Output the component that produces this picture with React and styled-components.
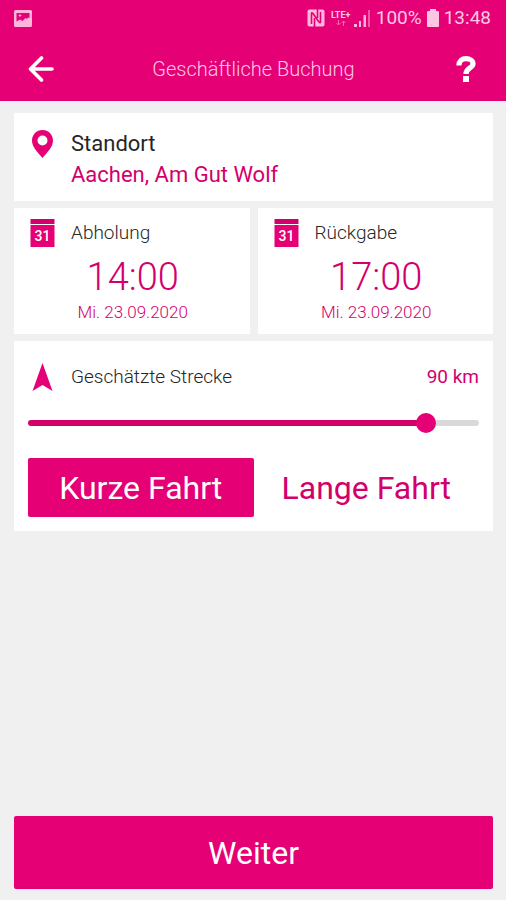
import React, { useState } from "react";
import styled, { createGlobalStyle } from "styled-components";

const magenta = "#e50075";
const ink = "#d3006c";

const GlobalStyle = createGlobalStyle`
  *, *::before, *::after { box-sizing: border-box; }
  body {
    margin: 0;
    background: #f0f0f0;
    font-family: Roboto, "Liberation Sans", sans-serif;
    color: #262626;
  }
  button, input { font: inherit; margin: 0; }
  h1, h2, p { margin: 0; font-weight: inherit; }
`;

const Screen = styled.div`
  min-height: 100vh;
  display: flex;
  flex-direction: column;
`;

const Header = styled.header`
  background: ${magenta};
  color: #ffc6e4;
`;

const StatusBar = styled.div`
  display: flex;
  align-items: center;
  justify-content: space-between;
  height: 36px;
  padding: 0 15px 0 14px;
  font-size: 19px;
  line-height: 24px;
`;

const StatusGroup = styled.div`
  display: flex;
  align-items: center;
  gap: 5px;
`;

const NetworkGroup = styled.div`
  display: flex;
  align-items: center;
  gap: 2px;
`;

const TitleBar = styled.div`
  display: grid;
  grid-template-columns: 48px 1fr 48px;
  align-items: center;
  height: 65px;
  padding: 0 16px 0 17px;
`;

const Title = styled.h1`
  font-size: 20px;
  line-height: 28px;
  font-weight: 300;
  text-align: center;
`;

const IconButton = styled.button`
  display: grid;
  place-items: center;
  height: 48px;
  padding: 0;
  border: 0;
  background: none;
  color: #fff;
`;

const Main = styled.main`
  flex: 1;
  display: flex;
  flex-direction: column;
  gap: 7px;
  padding: 12px 13px 11px 14px;
`;

const Card = styled.section`
  background: #fff;
  padding: ${(p) => p.$pad};
`;

const CardHead = styled.div`
  display: grid;
  grid-template-columns: 29px 1fr auto;
  column-gap: 14px;
  align-items: center;
`;

const PlaceLabel = styled.h2`
  font-size: 22px;
  line-height: 30px;
  font-weight: 400;
`;

const Place = styled.p`
  grid-column: 2;
  color: ${ink};
  font-size: 22px;
  line-height: 32px;
`;

const Label = styled.label`
  font-size: 19px;
  line-height: 30px;
  font-weight: 300;
`;

const Distance = styled.output`
  font-size: 19px;
  line-height: 30px;
  color: ${ink};
`;

const TimeRow = styled.div`
  display: grid;
  grid-template-columns: 1fr 1fr;
  gap: 8px;
`;

const TimeBlock = styled.div`
  display: flex;
  flex-direction: column;
  align-items: center;
  padding-left: 2px;
  color: ${ink};
  font-weight: 300;
`;

const Time = styled.time`
  font-size: 38px;
  line-height: 58px;
`;

const DateText = styled.p`
  font-size: 17px;
  line-height: 12px;
`;

const Slider = styled.input`
  appearance: none;
  display: block;
  width: 100%;
  height: 20px;
  margin: 21px 0 25px;
  background: none;
  &::-webkit-slider-runnable-track {
    height: 6px;
    border-radius: 3px;
    background: linear-gradient(to right, ${ink} var(--fill), #d9d9d9 var(--fill));
  }
  &::-webkit-slider-thumb {
    appearance: none;
    width: 20px;
    height: 20px;
    margin-top: -7px;
    border-radius: 50%;
    background: ${magenta};
  }
`;

const TripOptions = styled.div`
  display: grid;
  grid-template-columns: 1fr 1fr;
`;

const Button = styled.button`
  height: ${(p) => (p.$tall ? "73px" : "59px")};
  padding: 0;
  border: 0;
  border-radius: 2px;
  font-size: 32px;
  line-height: 40px;
  color: ${(p) => (p.$filled ? "#fff" : ink)};
  background: ${(p) => (p.$filled ? magenta : "transparent")};
`;

const Footer = styled.div`
  display: grid;
  margin-top: auto;
`;

const PictureIcon = () => (
  <svg width="18" height="17" viewBox="0 0 18 17" aria-hidden="true">
    <path fill="#ffb5dc" fillRule="evenodd" d="M1.500 0h15Q18 0 18 1.500v14q0 1.500-1.500 1.500h-15Q0 17 0 15.500v-14Q0 0 1.500 0ZM2.500 3v8.500L6 9.500l2.500 1.500 3-3 1.500 1 1-1.500 1.500.5V3Z" />
    <path fill="#ffb5dc" d="M6 3.500l.6 1.400 1.400.6-1.400.6L6 7.500l-.6-1.400L4 5.500l1.400-.6Z" />
  </svg>
);

const NfcIcon = () => (
  <svg width="18" height="18" viewBox="0 0 18 18" aria-hidden="true">
    <rect x=".5" y=".5" width="17" height="17" rx="2" fill="#ffb9de" />
    <path fill="none" stroke={magenta} strokeWidth="1.600" d="M4.500 15V4.500Q4.500 3 6 4.500l6 8.500q1.500 1.500 1.500 0V3M7.500 9v9M10.500 9V0" />
  </svg>
);

const LteBox = styled.span`
  display: flex;
  flex-direction: column;
  align-items: center;
  width: 22px;
  font-size: 9px;
  line-height: 9px;
  font-weight: 700;
`;

const LteArrows = () => (
  <svg width="10" height="6" viewBox="0 0 10 6" aria-hidden="true">
    <path fill="none" stroke="#f76db2" d="M2.500 0v4M.5 3l2 2 2-2M7.500 6V1M5.500 3l2-2 2 2" />
  </svg>
);

const SignalIcon = () => (
  <svg width="17" height="18" viewBox="0 0 17 18" aria-hidden="true">
    <g fill="#ffb0da">
      <path d="M0 15h3v3H0zM5 12h2v6H5zM9.500 6h2.500v12H9.500z" />
      <path opacity=".5" d="M14 1h2v17h-2z" />
    </g>
  </svg>
);

const BatteryIcon = () => (
  <svg width="12" height="18" viewBox="0 0 12 18" aria-hidden="true">
    <path fill="#ffc6e4" d="M3 0h6v2h2q1 0 1 1v14q0 1-1 1H1q-1 0-1-1V3q0-1 1-1h2Z" />
  </svg>
);

const BackIcon = () => (
  <svg width="26" height="26" viewBox="0 0 26 26" aria-hidden="true">
    <path fill="none" stroke="#fff" strokeWidth="3.600" strokeLinecap="round" strokeLinejoin="round" d="M13.500 2 2.500 13l11 11M2.500 13H24" />
  </svg>
);

const HelpIcon = () => (
  <svg width="20" height="26" viewBox="0 0 20 26" aria-hidden="true">
    <path fill="none" stroke="#fff" strokeWidth="5.200" d="M2.900 9.500C3 5 6 2.700 10 2.700s7 2 7 5c0 4.400-7 4.300-7 10.300" />
    <rect x="7" y="20" width="6" height="6" fill="#fff" />
  </svg>
);

const PinIcon = () => (
  <svg width="29" height="28" viewBox="0 0 28 28" aria-hidden="true">
    <path fill={magenta} fillRule="evenodd" d="M14 0C7.900 0 3.500 4.700 3.500 10.500 3.500 17 9 22 14 28c5-6 10.500-11 10.500-17.500C24.500 4.700 20.100 0 14 0Zm0 5.500a5 5 0 1 1 0 10 5 5 0 0 1 0-10Z" />
  </svg>
);

const CalendarGlyph = styled.svg`
  font: 500 14px Roboto, sans-serif;
`;

const CalendarIcon = () => (
  <CalendarGlyph width="29" height="28" viewBox="0 0 28 28" aria-hidden="true">
    <path fill={ink} d="M2 0h24v5H2z" />
    <path fill={magenta} d="M2 6h24v22H2z" />
    <text x="14" y="22" textAnchor="middle" fill="#fff">31</text>
  </CalendarGlyph>
);

const RouteIcon = () => (
  <svg width="29" height="28" viewBox="0 0 28 28" aria-hidden="true">
    <path fill={magenta} d="M14 0 24 28l-10-6-10 6Z" />
  </svg>
);

const TimeCard = ({ label, time }) => (
  <Card $pad="10px 14px 16px">
    <CardHead>
      <CalendarIcon />
      <Label as="h2">{label}</Label>
    </CardHead>
    <TimeBlock>
      <Time>{time}</Time>
      <DateText>Mi. 23.09.2020</DateText>
    </TimeBlock>
  </Card>
);

export default function App() {
  const [distance, setDistance] = useState(90);
  const [trip, setTrip] = useState("Kurze Fahrt");

  return (
    <Screen>
      <GlobalStyle />
      <Header>
        <StatusBar>
          <PictureIcon />
          <StatusGroup>
            <NfcIcon />
            <NetworkGroup>
              <LteBox>LTE+<LteArrows /></LteBox>
              <SignalIcon />
            </NetworkGroup>
            <span>100%</span>
            <BatteryIcon />
            <span>13:48</span>
          </StatusGroup>
        </StatusBar>
        <TitleBar>
          <IconButton aria-label="Zurück"><BackIcon /></IconButton>
          <Title>Geschäftliche Buchung</Title>
          <IconButton aria-label="Hilfe"><HelpIcon /></IconButton>
        </TitleBar>
      </Header>
      <Main>
        <Card $pad="16px 14px 10px">
          <CardHead>
            <PinIcon />
            <PlaceLabel>Standort</PlaceLabel>
            <Place>Aachen, Am Gut Wolf</Place>
          </CardHead>
        </Card>
        <TimeRow>
          <TimeCard label="Abholung" time="14:00" />
          <TimeCard label="Rückgabe" time="17:00" />
        </TimeRow>
        <Card $pad="21px 14px 14px">
          <CardHead>
            <RouteIcon />
            <Label htmlFor="distance">Geschätzte Strecke</Label>
            <Distance htmlFor="distance">{distance} km</Distance>
          </CardHead>
          <Slider
            id="distance"
            type="range"
            min="0"
            max="100"
            value={distance}
            onChange={(e) => setDistance(Number(e.target.value))}
            style={{ "--fill": `${distance}%` }}
          />
          <TripOptions>
            {["Kurze Fahrt", "Lange Fahrt"].map((name) => (
              <Button
                key={name}
                $filled={trip === name}
                aria-pressed={trip === name}
                onClick={() => setTrip(name)}
              >
                {name}
              </Button>
            ))}
          </TripOptions>
        </Card>
        <Footer>
          <Button $filled $tall>Weiter</Button>
        </Footer>
      </Main>
    </Screen>
  );
}
